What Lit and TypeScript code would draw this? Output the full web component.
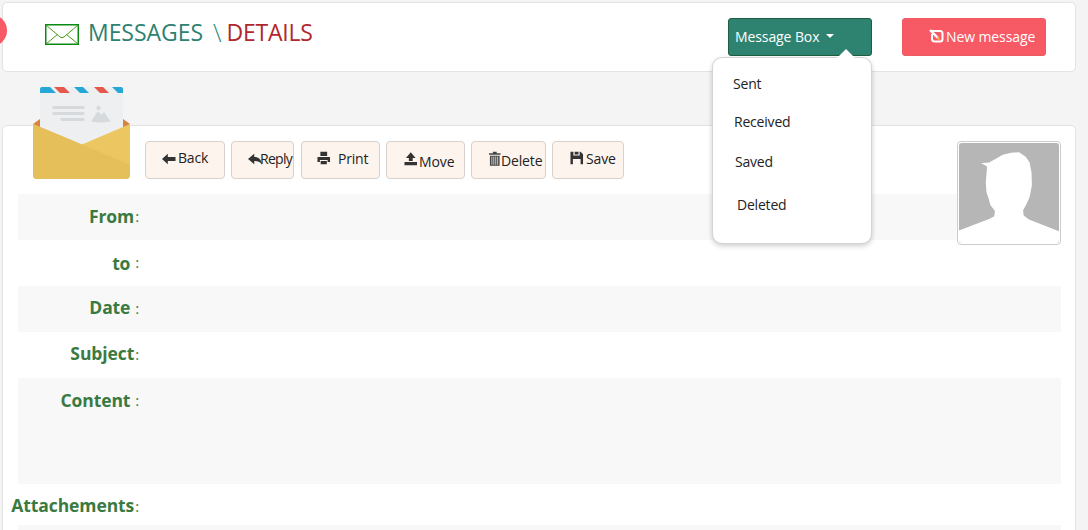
import { LitElement, html, css, svg } from "lit";
import { customElement } from "lit/decorators.js";

const icons: Record<string, unknown> = {
  back: svg`<path d="M0 7 L6 1.6 V5 H14 V9 H6 V12.4 Z" fill="#333"/>`,
  reply: svg`<path d="M0 6 L6.5 0.5 V3.8 C11 3.8 14 6.5 14.5 12 C13 9 10.5 8 6.5 8 V11.5 Z" fill="#333"/>`,
  print: svg`<path d="M3.5 0.5 H10.5 V5 H3.5 Z M0.5 6 H13.5 V11 H11 V9 H3 V11 H0.5 Z M3.8 10 H10.2 V13.5 H3.8 Z" fill="#333"/>`,
  move: svg`<path d="M7 0 L12 6 H9 V9 H5 V6 H2 Z M0.5 10 H13.5 V13.5 H0.5 Z" fill="#333"/>`,
  del: svg`<path d="M5 0.5 H9 V2 H13 V3.6 H1 V2 H5 Z M2 4.6 H12 V15 H2 Z" fill="#444"/><path d="M4 5.5 V14 M6 5.5 V14 M8 5.5 V14 M10 5.5 V14" stroke="#eee" stroke-width="0.8"/>`,
  save: svg`<path d="M0.5 0.5 H3.5 V4.5 H10 V0.5 H11 L13.5 3 V13.5 H0.5 Z M4.8 0.5 H8.8 V3.3 H4.8 Z M3 8 V13.5 H11 V8 Z" fill="#333" fill-rule="evenodd"/>`,
};

const buttons = [
  { label: "Back", icon: "back", width: 80, after: 0, pad: 16, gap: 2, textUp: 6, iconUp: 2, ls: -0.2 },
  { label: "Reply", icon: "reply", width: 63, after: 1, pad: 16, gap: -2, textUp: 4, iconUp: 0, ls: -0.7 },
  { label: "Print", icon: "print", width: 79, after: 0, pad: 15, gap: 7, textUp: 4, iconUp: 4, ls: -0.2 },
  { label: "Move", icon: "move", width: 79, after: 0, pad: 17, gap: 1, textUp: -2, iconUp: 2, ls: -0.1 },
  { label: "Delete", icon: "del", width: 75, after: 0, pad: 16, gap: -1, textUp: 0, iconUp: 4, ls: -0.15 },
  { label: "Save", icon: "save", width: 72, after: 0, pad: 17, gap: 2, textUp: 4, iconUp: 4, ls: -0.15 },
];

const rows = [
  { label: "From", sep: ":", alt: true, cls: "", up: 2 },
  { label: "to", sep: " :", alt: false, cls: "", up: 0 },
  { label: "Date", sep: " :", alt: true, cls: "", up: 4 },
  { label: "Subject", sep: ":", alt: false, cls: "", up: 4 },
  { label: "Content", sep: " :", alt: true, cls: "tall", up: 2 },
  { label: "Attachements", sep: ":", alt: false, cls: "att", up: 4 },
  { label: "", sep: "", alt: true, cls: "", up: 0 },
];

const menu = [
  { label: "Sent", cls: "m1" },
  { label: "Received", cls: "m2" },
  { label: "Saved", cls: "m3" },
  { label: "Deleted", cls: "m4" },
];

@customElement("app-root")
export class AppRoot extends LitElement {
  static styles = css`
    :host {
      display: block;
      height: 530px;
      overflow: hidden;
      background: #f4f4f4;
      font-family: "Open Sans", "Noto Sans", sans-serif;
      position: relative;
      color: #222;
    }
    .page {
      display: flex;
      flex-direction: column;
      padding: 2px 12px 0 2px;
      gap: 53px;
    }
    .card {
      background: #fff;
      border: 1px solid #e3e3e3;
      border-radius: 5px;
    }
    .header {
      height: 68px;
      display: flex;
      align-items: flex-start;
      padding-left: 42px;
      padding-right: 29px;
      box-sizing: content-box;
    }
    .title {
      display: flex;
      align-items: center;
      height: 25px;
      margin-top: 16px;
      font-size: 23px;
      letter-spacing: -0.05px;
      white-space: nowrap;
      font-weight: 400;
    }
    .title svg { margin-right: 9px; margin-top: 5px; }
    .msgs { color: #2e8270; }
    .slash { color: #2e8b85; margin: 0 5px 0 10px; font-weight: 300; font-size: 25px; }
    .det { color: #b0272d; letter-spacing: -0.2px; }
    .top-btn {
      box-sizing: border-box;
      height: 38px;
      width: 144px;
      margin-top: 15px;
      border-radius: 3px;
      color: #fff;
      font-size: 14px;
      display: flex;
      align-items: center;
      padding-bottom: 2px;
      white-space: nowrap;
      letter-spacing: -0.1px;
    }
    .box {
      margin-left: auto;
      background: #2e8270;
      border: 1px solid #1f5f3f;
      padding-left: 6px;
    }
    .caret {
      width: 0;
      height: 0;
      margin-left: 7px;
      border-left: 4px solid transparent;
      border-right: 4px solid transparent;
      border-top: 4px solid #fff;
    }
    .new {
      margin-left: 30px;
      background: #f75a65;
      border: 1px solid #ee5a62;
      padding-left: 26px;
      gap: 2px;
    }
    .body { height: 500px; }
    .toolbar {
      display: flex;
      gap: 6px;
      margin: 15px 0 15px 142px;
      height: 38px;
    }
    .btn {
      box-sizing: border-box;
      height: 38px;
      background: #fef4ee;
      border: 1px solid #d8d0cb;
      border-radius: 4px;
      display: flex;
      align-items: center;
      font-size: 14px;
      color: #222;
      white-space: nowrap;
    }
    .btn svg { flex: none; }
    .rows { margin: 0 14px 0 15px; }
    .row { height: 46px; display: flex; }
    .row.alt { background: #f8f8f8; }
    .row.tall { height: 106px; }
    .row.att { height: 41px; }
    .label {
      width: 121px;
      height: 46px;
      flex: none;
      display: flex;
      justify-content: flex-end;
      align-items: center;
      color: #3a7a40;
      font-weight: 700;
      font-size: 17.5px;
      letter-spacing: -0.1px;
      white-space: pre;
    }
    .sep { font-weight: 400; font-size: 15px; margin-left: 1px; margin-bottom: 2px; }
    .avatar {
      position: absolute;
      left: 957px;
      top: 141px;
      width: 104px;
      height: 104px;
      box-sizing: border-box;
      background: #fff;
      border: 1px solid #ccc;
      border-radius: 4px;
      padding: 1px;
    }
    .avatar svg { display: block; border-radius: 3px; }
    .envelope { position: absolute; left: 33px; top: 87px; }
    .dot {
      position: absolute;
      left: -23px;
      top: 15px;
      width: 30px;
      height: 31px;
      border-radius: 50%;
      background: #f75a65;
    }
    .menu {
      position: absolute;
      left: 712px;
      top: 57px;
      width: 160px;
      height: 187px;
      box-sizing: border-box;
      background: #fff;
      border: 1px solid #d4d4d4;
      border-radius: 10px;
      box-shadow: 0 2px 5px rgba(0, 0, 0, 0.2);
      font-size: 14px;
      letter-spacing: -0.2px;
      color: #222;
    }
    .menu::before {
      content: "";
      position: absolute;
      right: 15px;
      top: -9px;
      width: 0;
      height: 0;
      border-left: 10px solid transparent;
      border-right: 10px solid transparent;
      border-bottom: 10px solid #fff;
    }
    .item { position: absolute; line-height: 20px; }
    .m1 { left: 20px; top: 16px; }
    .m2 { left: 21px; top: 54px; }
    .m3 { left: 22px; top: 94px; }
    .m4 { left: 24px; top: 137px; }
  `;

  render() {
    return html`
      <div class="page">
        <div class="card header">
          <div class="title">
            <svg width="34" height="21" viewBox="0 0 34 21">
              <rect x="0.75" y="0.75" width="32.5" height="19.5" fill="#fff" stroke="#0b8a12" stroke-width="1.5"/>
              <path d="M1 1 L15 13 Q17 14.5 19 13 L33 1 M1 20 L12.5 10.5 M33 20 L21.5 10.5" fill="none" stroke="#4c9a1e" stroke-width="1"/>
            </svg>
            <span class="msgs">MESSAGES</span><span class="slash">\\</span><span class="det">DETAILS</span>
          </div>
          <div class="top-btn box">Message Box <span class="caret"></span></div>
          <div class="top-btn new">
            <svg width="15" height="14" viewBox="0 0 15 14">
              <path d="M3 2 H11 Q13.5 2 13.5 4.5 V10 Q13.5 12.5 11 12.5 H6 Q3 12.5 3 10 V5" fill="none" stroke="#fff" stroke-width="2"/>
              <path d="M1 1 L9 9" stroke="#fff" stroke-width="2.4"/>
              <path d="M8 8.5 L10.5 10.5" stroke="#f6b24a" stroke-width="2"/>
            </svg>
            New message
          </div>
        </div>
        <div class="card body">
          <div class="toolbar">
            ${buttons.map(
              (b) => html`<div class="btn" style="width:${b.width}px;padding-left:${b.pad}px;margin-right:${b.after}px">
                <svg
                  width="14"
                  height="15"
                  viewBox="0 0 14.5 15"
                  style="margin-right:${b.gap}px;margin-bottom:${b.iconUp}px"
                >${icons[b.icon]}</svg>
                <span style="margin-bottom:${b.textUp}px;letter-spacing:${b.ls}px">${b.label}</span>
              </div>`
            )}
          </div>
          <div class="rows">
            ${rows.map(
              (r) => html`<div class="row ${r.alt ? "alt" : ""} ${r.cls}">
                <div class="label"><span style="margin-bottom:${r.up}px">${r.label}</span><span class="sep">${r.sep}</span></div>
              </div>`
            )}
          </div>
        </div>
      </div>

      <div class="dot"></div>

      <svg class="envelope" width="98" height="93" viewBox="0 0 98 93">
        <path d="M0 37 L7 32 V45 Z M97 37 L90 32 V45 Z" fill="#d6843f"/>
        <path d="M7 2 Q7 0 9 0 H88 Q90 0 90 2 V70 H7 Z" fill="#eeeff0"/>
        <path d="M7 6 V2 Q7 0 9 0 H17 L23 6 Z" fill="#25a8d6"/>
        <path d="M21 0 H31 L37 6 H27 Z" fill="#e5584c"/>
        <path d="M41 0 H50 L56 6 H47 Z" fill="#25a8d6"/>
        <path d="M61 0 H70 L76 6 H67 Z" fill="#e5584c"/>
        <path d="M79 0 H88 Q90 0 90 2 V6 H85 Z" fill="#25a8d6"/>
        <path d="M20 19 H51 Q52.500 20.500 51 22 H20 Q18.500 20.500 20 19 Z M20 25 H51 Q52.500 26.500 51 28 H20 Q18.500 26.500 20 25 Z M28 31 H51 Q52.500 32.500 51 34 H28 Q26.500 32.500 28 31 Z" fill="#d6dadc"/>
        <circle cx="65.500" cy="21" r="2.200" fill="#d6dadc"/>
        <path d="M58 34.500 L65 24 L68 28 L71 25 L77.500 34.500 Q68 36.500 58 34.500 Z" fill="#d6dadc"/>
        <path d="M0 37 L49 57.500 L97 37 V88 Q97 92 93 92 H4 Q0 92 0 88 Z" fill="#ecc660"/>
        <path d="M0 37 L49 57.500 L97 78 V88 Q97 92 93 92 H4 Q0 92 0 88 Z" fill="#e5bf5a"/>
      </svg>

      <div class="avatar">
        <svg width="100" height="100" viewBox="0 0 306 306">
          <rect width="306" height="306" fill="#b6b6b6"/>
          <path d="M0 268 L94 232 L108 224 L110 208 L96 190 L90 168 L84 150 L82 120 L86 72 L68 62 L92 60 L110 50 L134 36 L160 30 L184 28 L204 42 L216 60 L222 90 L223 130 L216 165 L206 188 L196 206 L198 222 L214 234 L306 270 V306 H0 Z" fill="#fff"/>
        </svg>
      </div>

      <div class="menu">
        ${menu.map((m) => html`<div class="item ${m.cls}">${m.label}</div>`)}
      </div>
    `;
  }
}
